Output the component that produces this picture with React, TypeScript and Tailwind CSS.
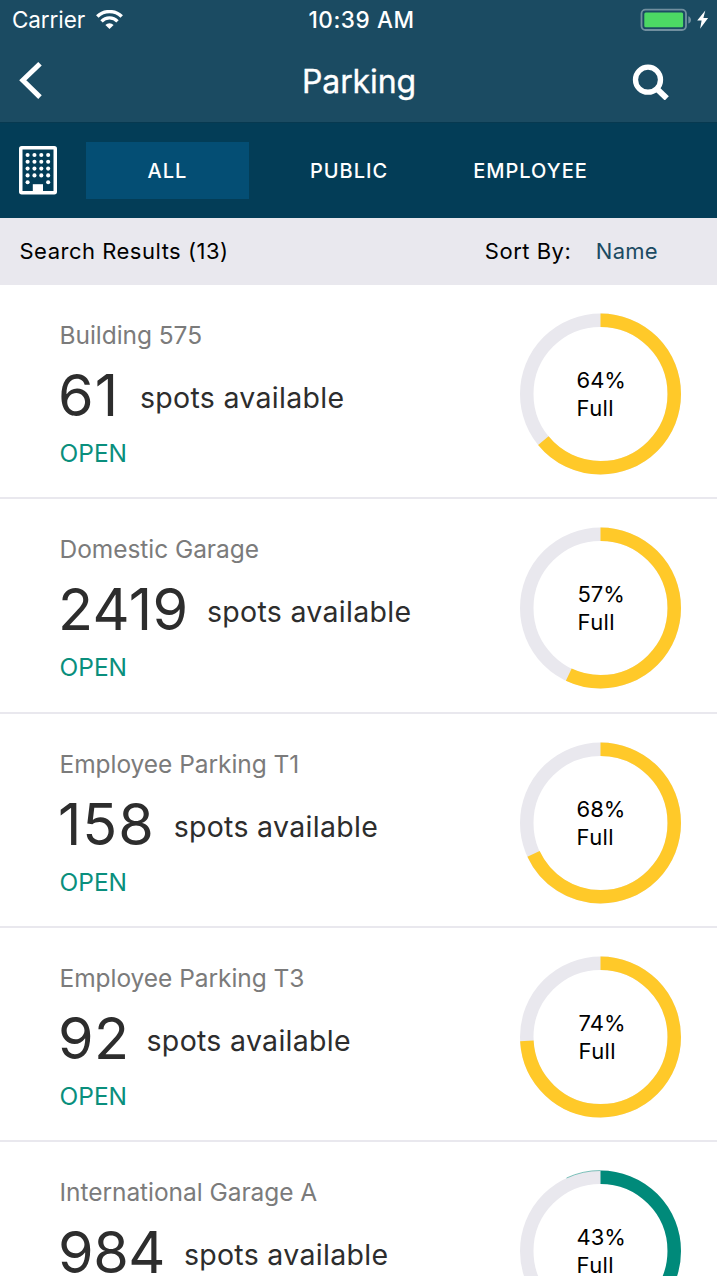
import React from "react";

type Garage = {
  name: string;
  spots: number;
  full: number;
  color: string;
  inset: string;
  digits: string;
  sliver?: boolean;
};

const YELLOW = "#ffc929";
const GREEN = "#008a7a";

const garages: Garage[] = [
  { name: "Building 575", spots: 61, full: 64, color: YELLOW, inset: "ml-[56.5px]", digits: "tracking-[1.2px] mr-[20.5px]" },
  { name: "Domestic Garage", spots: 2419, full: 57, color: YELLOW, inset: "ml-[57.5px]", digits: "tracking-[0.3px] mr-[18.5px]" },
  { name: "Employee Parking T1", spots: 158, full: 68, color: YELLOW, inset: "ml-[56.5px]", digits: "tracking-[0.9px] mr-[19px]" },
  { name: "Employee Parking T3", spots: 92, full: 74, color: YELLOW, inset: "ml-[58.5px]", digits: "tracking-[0.4px] mr-[17px]" },
  { name: "International Garage A", spots: 984, full: 43, color: GREEN, inset: "ml-[56.5px]", digits: "tracking-[-0.5px] mr-[19px]", sliver: true },
];

function Ring({ garage }: { garage: Garage }) {
  const radius = 73.75;
  const length = 2 * Math.PI * radius;
  return (
    <div className="relative mt-[28px] flex h-[162px] w-[161px] items-center">
      <svg className="absolute inset-0" width="161" height="162" viewBox="0 0 161 162" fill="none">
        <circle cx="80.5" cy="81" r={radius} stroke="#e9e8ee" strokeWidth="13.5" />
        <circle
          cx="80.5"
          cy="81"
          r={radius}
          stroke={garage.color}
          strokeWidth="13.5"
          strokeDasharray={`${(length * garage.full) / 100} ${length}`}
          transform="rotate(-90 80.5 81)"
        />
        {garage.sliver && <path d="M46.5 8A80.5 80.5 0 0 1 80.5 0.5" stroke={garage.color} strokeWidth="0.5" />}
      </svg>
      <div className={`relative text-[22px] leading-[28px] text-black ${garage.inset}`}>
        <div>{garage.full}%</div>
        <div className="tracking-[0.4px]">Full</div>
      </div>
    </div>
  );
}

function GarageRow({ garage }: { garage: Garage }) {
  return (
    <li className="flex h-[214.25px] shrink-0 justify-between border-b-2 border-[#e9e8ee] pr-[36px] pl-[59.5px]">
      <div className="pt-[35px]">
        <div className="text-[24.5px] leading-[30px] tracking-[-0.05px] whitespace-nowrap text-[#7b7b7b]">{garage.name}</div>
        <div className="mt-[15px] -ml-[1.5px] flex h-[60px] items-start text-[#2d2d2d]">
          <span className={`text-[57.5px] leading-[60px] ${garage.digits}`}>{garage.spots}</span>
          <span className="mt-[16px] text-[28.5px] leading-[34px] tracking-[0.3px] whitespace-nowrap">spots available</span>
        </div>
        <div className="mt-[13px] text-[24.5px] leading-[30px] text-[#0a8f7d]">OPEN</div>
      </div>
      <Ring garage={garage} />
    </li>
  );
}

function BuildingIcon() {
  const dots: [number, number][] = [];
  for (let row = 0; row < 5; row++) {
    for (let col = 0; col < 4; col++) {
      if (row < 4 || col === 0 || col === 3) dots.push([8.6 + col * 6.85, 9 + row * 6.8]);
    }
  }
  return (
    <svg width="38" height="49" viewBox="0 0 38 49" fill="none">
      <rect x="1.75" y="1.75" width="34.5" height="45" rx="1" stroke="white" strokeWidth="3.5" />
      {dots.map(([x, y]) => (
        <circle key={`${x}-${y}`} cx={x} cy={y} r="2.05" fill="white" />
      ))}
      <path d="M13.8 38.2h10.2V47.5H13.8z" fill="white" />
    </svg>
  );
}

export default function App() {
  return (
    <div className="flex h-[1276px] w-[717px] flex-col overflow-hidden bg-white font-['Inter',sans-serif]">
      <header className="h-[122px] shrink-0 bg-[#1b4b62] text-white">
        <div className="grid h-[40px] grid-cols-3 items-center">
          <div className="flex items-center gap-[11px] pl-[12px]">
            <span className="text-[22.5px] leading-[28px] tracking-[-0.1px]">Carrier</span>
            <svg width="27" height="20" viewBox="0 0 27 20" fill="none" stroke="white">
              <path d="M1.3 6.6a17.4 17.4 0 0 1 24.4 0" strokeWidth="3.5" />
              <path d="M5.5 11.3a11.2 11.2 0 0 1 16 0" strokeWidth="3.3" />
              <path d="M13.5 19.1 9.4 14.9a5.9 5.9 0 0 1 8.2 0z" fill="white" stroke="none" />
            </svg>
          </div>
          <span className="pl-[6px] text-center text-[22.5px] leading-[28px] font-medium tracking-[0.6px]">10:39 AM</span>
          <svg className="justify-self-end" width="78" height="40" viewBox="0 0 78 40" fill="none">
            <rect x="2.5" y="9.7" width="44.5" height="20.3" rx="4" stroke="#718f9f" strokeWidth="1.8" />
            <rect x="5.3" y="12.4" width="38.8" height="14.8" rx="1.5" fill="#4cd964" />
            <path d="M49.3 16.2c3.6 1 3.6 6.4 0 7.4z" fill="#718f9f" />
            <path d="M66.3 10.5 58.2 20.5h4.4l-1.5 8.3 8-10.8h-4.7z" fill="white" />
          </svg>
        </div>
        <div className="grid h-[82px] grid-cols-3 items-center">
          <svg className="ml-[18px]" width="26" height="40" viewBox="0 0 26 40" fill="none">
            <path d="M22 2.7 4.8 19.3 22 36.1" stroke="white" strokeWidth="5" />
          </svg>
          <h1 className="pt-[2px] pl-[1px] text-center text-[32px] leading-[40px] tracking-[-0.1px] [-webkit-text-stroke:0.35px_white]">Parking</h1>
          <svg className="mr-[47px] justify-self-end" width="38" height="38" viewBox="0 0 38 38" fill="none">
            <circle cx="16" cy="17.7" r="12.5" stroke="white" strokeWidth="5.3" />
            <path d="M24.7 26.7 34.8 36.4" stroke="white" strokeWidth="5.8" />
          </svg>
        </div>
      </header>

      <nav className="flex h-[96px] shrink-0 items-center border-t border-[#073950] bg-[#033d57] pl-[19px] text-[20px] font-medium text-white">
        <BuildingIcon />
        <button className="ml-[29px] h-[57px] w-[163px] bg-[#044e74] tracking-[1px]">ALL</button>
        <button className="h-[57px] w-[200px] tracking-[1px]">PUBLIC</button>
        <button className="h-[57px] w-[163px] tracking-[1px]">EMPLOYEE</button>
      </nav>

      <div className="flex h-[67px] shrink-0 items-center bg-[#e9e8ee] pr-[59px] pb-[2px] pl-[19.5px] text-[22px] leading-[28px] text-black">
        <span className="tracking-[0.5px]">Search Results (13)</span>
        <span className="ml-auto tracking-[0.5px]">Sort By:</span>
        <span className="ml-[24.5px] tracking-[0.3px] text-[#1b4b62]">Name</span>
      </div>

      <ul className="flex flex-col">
        {garages.map((garage) => (
          <GarageRow key={garage.name} garage={garage} />
        ))}
      </ul>
    </div>
  );
}
